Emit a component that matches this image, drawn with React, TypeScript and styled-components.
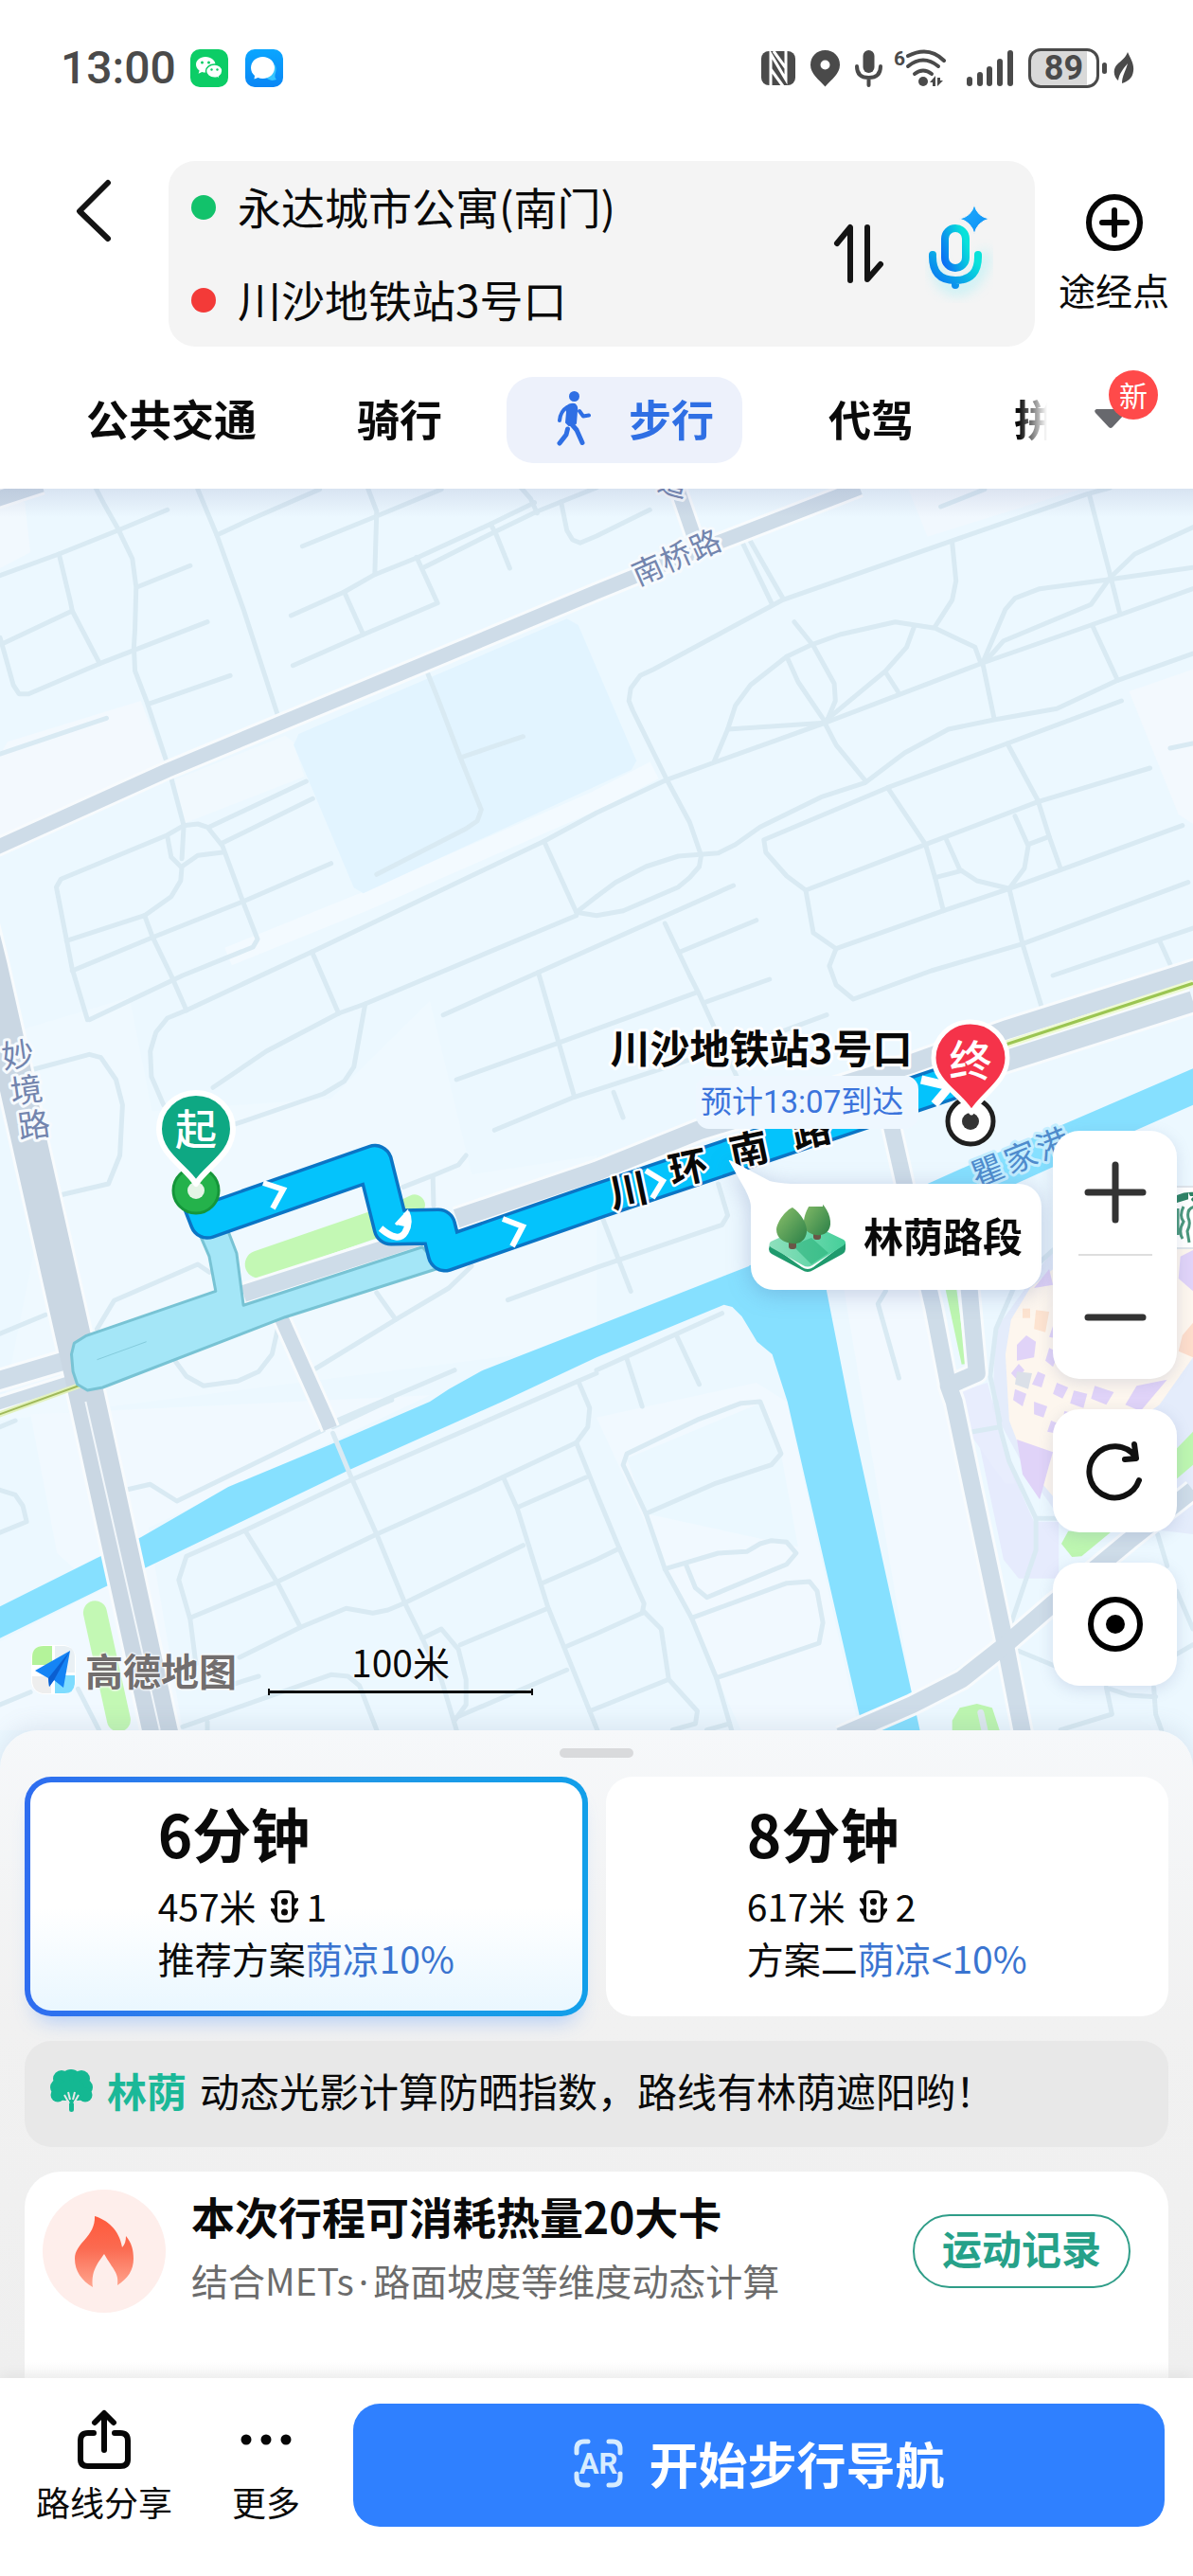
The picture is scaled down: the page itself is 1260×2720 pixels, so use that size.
import React from 'react';
import styled, { createGlobalStyle, css } from 'styled-components';

const GlobalStyle = createGlobalStyle`
  *, *::before, *::after { box-sizing: border-box; }
  body {
    margin: 0;
    background: #ffffff;
    color: #0a0a0a;
    font-family: "Noto Sans CJK SC", "Noto Sans", sans-serif;
  }
  button, input { font: inherit; color: inherit; }
  button { background: none; border: 0; padding: 0; margin: 0; cursor: pointer; }
  svg { display: block; }
`;

/* ---------- page ---------- */

const Page = styled.div`
  display: flex;
  flex-direction: column;
  width: 100%;
  overflow: hidden;
`;

const Header = styled.header`
  padding: 51px 0 27px;
  background: #ffffff;
`;

/* ---------- status bar ---------- */

const StatusBar = styled.div`
  display: flex;
  align-items: center;
  justify-content: space-between;
  height: 42px;
  padding: 0 62px 0 64px;
  color: #4a4a4a;
`;

const StatusGroup = styled.div<{ $gap: number }>`
  display: flex;
  align-items: center;
  gap: ${(p) => p.$gap}px;
`;

const Clock = styled.time`
  font: 500 48px/42px Roboto, sans-serif;
  margin-right: -3px;
`;

const BatteryText = styled.span`
  display: flex;
  align-items: center;
  justify-content: center;
  width: 75px;
  height: 42px;
  border: 3px solid #4a4a4a;
  border-radius: 13px;
  background: linear-gradient(90deg, #d9d9d9 85%, #ffffff 85%);
  font: 700 36px/36px Roboto, sans-serif;
`;

const Battery = styled.div`
  display: flex;
  align-items: center;
  gap: 3px;
  &::after {
    content: '';
    width: 5px;
    height: 12px;
    border-radius: 3px;
    background: #4a4a4a;
  }
`;

/* ---------- search ---------- */

const SearchRow = styled.div`
  display: flex;
  align-items: stretch;
  margin-top: 77px;
`;

const BackButton = styled.button`
  display: flex;
  flex: 0 0 178px;
  align-items: flex-start;
  padding: 19px 0 0 79px;
`;

const SearchBox = styled.div`
  display: flex;
  flex: 1;
  min-width: 0;
  align-items: center;
  padding: 0 44px 0 24px;
  border-radius: 28px;
  background: #f4f4f4;
`;

const Fields = styled.div`
  flex: 1;
  min-width: 0;
`;

const Field = styled.label<{ $dot: string }>`
  display: flex;
  align-items: center;
  gap: 23px;
  height: 98px;
  &::before {
    content: '';
    flex: none;
    width: 26px;
    height: 26px;
    border-radius: 50%;
    background: ${(p) => p.$dot};
  }
`;

const FieldInput = styled.input`
  flex: 1;
  min-width: 0;
  height: 72px;
  padding: 0 0 4px;
  border: 0;
  outline: 0;
  background: transparent;
  font-size: 46px;
  line-height: 68px;
`;

const BoxButton = styled.button`
  margin-left: 43px;
`;

const ViaButton = styled.button`
  display: flex;
  flex: 0 0 167px;
  flex-direction: column;
  align-items: center;
  padding-top: 34px;
  font-size: 39px;
  line-height: 56px;
  gap: 11px;
`;

/* ---------- tabs ---------- */

const TabRow = styled.div`
  display: flex;
  height: 91px;
  margin-top: 32px;
`;

const Tabs = styled.nav`
  display: flex;
  flex: 1;
  min-width: 0;
  padding-left: 38px;
  overflow: hidden;
  mask-image: linear-gradient(90deg, #000 calc(100% - 32px), transparent calc(100% - 2px));
`;

const Tab = styled.button<{ $active?: boolean }>`
  display: flex;
  flex: none;
  align-items: center;
  padding: 0 53px 4px;
  font-size: 45px;
  line-height: 66px;
  font-weight: 700;
  white-space: nowrap;
  ${(p) =>
    p.$active &&
    css`
      gap: 40px;
      margin: 0 38px 0 15px;
      padding: 0 30px 4px 53px;
      border-radius: 28px;
      background: #edf1fb;
      color: #2f6fe4;
    `}
`;

const MoreTabs = styled.button`
  position: relative;
  flex: 0 0 152px;
`;

const TabArrow = styled.svg`
  position: absolute;
  left: 47px;
  top: 33px;
`;

const Badge = styled.span`
  position: absolute;
  left: 63px;
  top: -7px;
  width: 52px;
  height: 52px;
  border-radius: 50%;
  background: #ff4a4a;
  color: #ffffff;
  font-size: 30px;
  line-height: 50px;
  text-align: center;
`;

/* ---------- map ---------- */

const MapArea = styled.section`
  position: relative;
  height: 1351px;
  background: #eef8ff;
  overflow: hidden;
`;

const MapCanvas = styled.svg`
  width: 100%;
  height: 100%;
  text {
    font-family: "Noto Sans CJK SC", sans-serif;
    text-anchor: middle;
    paint-order: stroke;
    stroke-linejoin: round;
  }
`;

const HeaderShade = styled.div`
  position: absolute;
  inset: 0 0 auto;
  height: 30px;
  background: linear-gradient(rgba(110, 120, 170, 0.16), rgba(110, 120, 170, 0));
`;

const Eta = styled.div`
  position: absolute;
  left: calc(50% + 105px);
  top: 620px;
  padding: 0 16px 0 5px;
  border-radius: 14px;
  background: #eef7ff;
  color: #3b74dc;
  font: 400 33px/56px Roboto, "Noto Sans CJK SC", sans-serif;
  white-space: nowrap;
`;

const Callout = styled.div`
  position: absolute;
  left: calc(50% + 163px);
  top: 734px;
  display: flex;
  align-items: center;
  gap: 17px;
  height: 112px;
  padding: 0 20px 5px 18px;
  border-radius: 24px;
  background: #ffffff;
  filter: drop-shadow(0 4px 12px rgba(70, 90, 150, 0.28));
  font-size: 42px;
  line-height: 60px;
  font-weight: 700;
  white-space: nowrap;
`;

const CalloutTail = styled.svg`
  position: absolute;
  left: -24px;
  top: -26px;
`;

const Controls = styled.div`
  position: absolute;
  right: 17px;
  top: 678px;
  display: flex;
  flex-direction: column;
  gap: 32px;
`;

const ControlCard = styled.div`
  display: flex;
  flex-direction: column;
  align-items: center;
  width: 131px;
  border-radius: 28px;
  background: #ffffff;
  box-shadow: 0 4px 16px rgba(90, 110, 160, 0.18);
`;

const ControlButton = styled.button`
  display: flex;
  align-items: center;
  justify-content: center;
  width: 131px;
  height: 130px;
`;

const ControlRule = styled.hr`
  width: 78px;
  height: 2px;
  margin: 0;
  border: 0;
  background: #dedede;
`;

const Brand = styled.div`
  position: absolute;
  left: 32px;
  top: 1219px;
  display: flex;
  align-items: center;
  gap: 9px;
  color: #726e6e;
  font-size: 40px;
  line-height: 56px;
  font-weight: 700;
  text-shadow: 0 0 3px #fff, 0 0 3px #fff, 0 0 3px #fff;
`;

const Scale = styled.div`
  position: absolute;
  left: 283px;
  top: 1209px;
  width: 280px;
  font-size: 39px;
  line-height: 58px;
  text-align: center;
  text-shadow: 0 0 3px #fff, 0 0 3px #fff;
`;

const ScaleLine = styled.div`
  height: 7px;
  border: solid #0a0a0a;
  border-width: 0 2px;
  background: linear-gradient(#0a0a0a, #0a0a0a) center / 100% 3px no-repeat;
`;

/* ---------- bottom sheet ---------- */

const Sheet = styled.main`
  position: relative;
  display: flex;
  flex-direction: column;
  margin-top: -40px;
  padding: 19px 26px 0;
  border-radius: 40px 40px 0 0;
  background: linear-gradient(#f6f8fa, #f1f1f1 45%, #efefef);
  box-shadow: 0 -4px 26px rgba(90, 110, 150, 0.14);
`;

const Handle = styled.div`
  align-self: center;
  width: 78px;
  height: 10px;
  border-radius: 5px;
  background: #d9dadc;
`;

const Plans = styled.div`
  display: grid;
  grid-template-columns: 1fr 1fr;
  gap: 19px;
  margin-top: 20px;
`;

const Plan = styled.button<{ $selected?: boolean }>`
  display: flex;
  justify-content: center;
  padding: 18px 0 28px;
  border: 6px solid transparent;
  border-radius: 28px;
  text-align: left;
  background: #ffffff border-box;
  ${(p) =>
    p.$selected &&
    css`
      background: linear-gradient(#ffffff 55%, #eaf7ff) padding-box,
        linear-gradient(90deg, #2f6df0, #1f97e6 60%, #129fea) border-box;
      box-shadow: 0 16px 22px -12px rgba(70, 140, 255, 0.4);
    `}
`;

const PlanBody = styled.span`
  display: flex;
  flex-direction: column;
`;

const PlanTime = styled.strong`
  font-size: 62px;
  line-height: 70px;
  font-weight: 700;
  margin-bottom: 15px;
`;

const PlanLine = styled.span`
  display: flex;
  align-items: center;
  height: 55px;
  font-size: 39px;
  line-height: 55px;
  white-space: nowrap;
  svg { margin: 0 9px 0 15px; }
`;

const Cool = styled.span`
  color: #3a74d0;
`;

const Notice = styled.div`
  display: flex;
  align-items: center;
  height: 112px;
  margin-top: 26px;
  padding: 0 27px 8px;
  border-radius: 28px;
  background: #e8e8e8;
  font-size: 42px;
  line-height: 60px;
  white-space: nowrap;
`;

const NoticeTag = styled.strong`
  margin: 0 14px 0 15px;
  color: #1bb898;
  font-weight: 700;
`;

const Sport = styled.section`
  display: flex;
  align-items: flex-start;
  height: 218px;
  margin-top: 26px;
  padding: 19px 40px 0 19px;
  border-radius: 38px 38px 0 0;
  background: linear-gradient(#ffffff 92%, #f8f8f8);
`;

const FlameDisc = styled.div`
  display: flex;
  flex: none;
  align-items: center;
  justify-content: center;
  width: 130px;
  height: 130px;
  border-radius: 50%;
  background: #feeeeb;
`;

const SportText = styled.div`
  flex: 1;
  min-width: 0;
  margin-left: 27px;
  white-space: nowrap;
`;

const SportTitle = styled.h2`
  margin: -7px 0 0;
  font-size: 46px;
  line-height: 68px;
  font-weight: 700;
`;

const SportNote = styled.p`
  margin: 6px 0 0;
  color: #6c6c6c;
  font-size: 39px;
  line-height: 56px;
`;

const MiddleDot = styled.span`
  margin: 0 5px;
  font-family: "Noto Sans", sans-serif;
`;

const RecordButton = styled.button`
  flex: none;
  height: 78px;
  margin-top: 26px;
  padding: 0 29px 8px;
  border: 2px solid #2f9d88;
  border-radius: 39px;
  color: #26a189;
  font-size: 42px;
  line-height: 60px;
  font-weight: 700;
`;

/* ---------- footer ---------- */

const Footer = styled.footer`
  position: relative;
  display: flex;
  align-items: flex-start;
  height: 209px;
  padding: 27px 30px 0 13px;
  background: #ffffff;
  box-shadow: 0 -3px 14px rgba(0, 0, 0, 0.06);
`;

const FooterAction = styled.button<{ $width: number }>`
  display: flex;
  flex-direction: column;
  align-items: center;
  width: ${(p) => p.$width}px;
  padding-top: 6px;
  gap: 5px;
  font-size: 36px;
  line-height: 56px;
  white-space: nowrap;
`;

const StartButton = styled.button`
  display: flex;
  flex: 1;
  align-items: center;
  justify-content: center;
  gap: 26px;
  height: 130px;
  margin-left: 18px;
  padding-bottom: 4px;
  border-radius: 28px;
  background: #2f80ff;
  color: #ffffff;
  font-size: 52px;
  line-height: 76px;
  font-weight: 700;
`;

/* ---------- map data ---------- */

type Tile = { x: number; y: number };

const NW: Tile = { x: 0, y: 510 };
const NE: Tile = { x: 630, y: 510 };
const W: Tile = { x: 0, y: 1020 };
const E: Tile = { x: 630, y: 1020 };
const SW: Tile = { x: 0, y: 1480 };
const SE: Tile = { x: 630, y: 1480 };

// A tile spans 630 map units over a local grid 1568 wide; its rows are a third of a unit.
const project = (tile: Tile, points: string) =>
  points
    .split(' ')
    .map((pair) => {
      const [x, y] = pair.split(',').map(Number);
      return `${(tile.x + (x * 630) / 1568).toFixed(1)},${(tile.y + y / 3).toFixed(1)}`;
    })
    .join(' ');

const LANES: [Tile, string[]][] = [
  [NW, [
    '-5,295 155,225 310,150 440,85',
    '245,0 275,70 310,145 348,240 358,330 355,460 352,520 355,595 385,690 410,780 440,890',
    '450,935 483,1085 478,1190',
    '520,20 570,165 640,400 730,735',
    '570,165 650,120 840,20',
    '155,225 185,375 190,405 262,572',
    '5,510 190,405',
    '0,490 12,540 35,640 50,668 75,668 262,572 352,530 545,440',
    '360,330 500,262',
    '390,700 605,610',
    '-5,860 280,745',
    '795,200 990,105 1160,20',
    '965,10 990,90 985,290',
    '765,420 905,345 985,290 1100,235 1290,130 1405,62',
    '1110,270 1300,155 1412,90 1568,15',
    '1370,15 1395,50 1412,95',
    '1290,130 1305,165 1340,270',
    '905,345 955,480',
    '770,578 955,480 1150,380 1095,235',
    '1475,60 1490,150 1505,180 1525,190 1568,168 1708,85',
    '1120,590 1150,680 1210,870 1265,1035 1255,1070 1225,1095 990,1240',
    '1210,870 1375,803',
    '550,1090 805,945',
    '585,1140 822,1000',
    '483,1085 440,1115 160,1255 148,1280 190,1540 230,1700',
    '483,1085 520,1080 545,1090 585,1150 640,1330 677,1445 665,1470 480,1560 235,1700',
    '440,1120 450,1185 475,1215',
    '585,1170 520,1180 478,1215 475,1260 450,1310 380,1370 175,1450',
    '190,1545 400,1440 640,1325 870,1205',
    '380,1370 400,1435 450,1560 490,1670',
    '490,1670 820,1485 1430,1135 1568,1045 1753,940',
    '820,1485 890,1680',
    '1430,1135 1515,1360 1568,1370 1638,1355 1783,1280 1813,1250 1838,1215 1843,1180',
    '1515,1360 1568,1310',
    '890,1680 960,1650 1515,1370',
    '1165,1685 1415,1550 1928,1275',
  ]],
  [NE, [
    '380,180 460,380',
    '400,175 490,365',
    '185,940 95,720 85,690 90,650 115,610 150,590 490,370 930,185 1290,35 1350,15',
    '185,940 245,1075 275,1180',
    '905,75 1020,20',
    '1295,35 1350,290 1375,410',
    '935,190 945,310 935,370 890,455',
    '520,440 570,515 625,635 628,690 605,755',
    '310,880 345,780 365,705 405,640 500,550 560,515 640,480 785,440 890,460 995,520 1010,570',
    '500,550 530,630 600,755',
    '345,780 600,760',
    '185,940 310,885 600,760 1015,570 1300,450 1568,335',
    '835,455 815,520 760,595 600,755',
    '760,600 792,660',
    '1015,570 1075,400 1100,365 1165,335 1350,305 1568,268',
    '1030,555 1070,500 1300,385 1350,300 1415,225 1568,140',
    '1015,570 1045,745',
    '1305,455 1370,625',
    '0,1310 50,1265 130,1215 215,1182 320,1172 365,1145 430,1090 590,995 705,950 810,855 925,780 1045,750 1210,715 1370,625 1568,540',
    '600,760 630,830 708,945',
    '550,1290 500,1245 445,1170 440,1130 765,965 1080,825 1380,690',
    '550,1290 865,1145 1160,1010 1455,903',
    '765,965 865,1145 890,1250 912,1355',
    '1080,825 1160,1005 1190,1120 1218,1215',
    '920,1130 955,1225 1000,1260 1085,1285 1125,1220 1135,1150 1100,1055',
    '890,1250 960,1228',
    '1135,1145 1190,1120',
    '550,1290 570,1425 630,1475 912,1355 1085,1285 1540,1085',
    '630,1475 612,1530 630,1590 675,1635 880,1545 1120,1460 1555,1265',
    '1085,1285 1120,1460 1170,1660',
    '1200,1560 1568,1410',
    '1480,1450 1510,1530',
    '1508,840 1568,825',
    '180,1395 245,1560 270,1620 380,1910',
    '220,1485 420,1385',
  ]],
  [W, [
    '490,140 440,165 410,210 395,270 398,350 430,440',
    '890,150 700,270 560,385',
    '960,120 930,320 905,365 850,405 620,500',
    '80,330 235,280 265,290 305,360 322,440 315,600 285,690 160,725',
    '1415,20 1510,415',
    '1200,360 1465,245 1828,85',
    '1300,520 1510,415 1958,240',
    '1225,600 1205,630 1135,665 1060,700',
    '1138,670 1140,760',
    '550,970 520,945 300,1060 255,1150',
    '0,1165 120,1105',
    '460,1250 490,1300 535,1330 625,1315 680,1285 715,1230 730,1150',
    '990,1035 1040,1120',
    '830,1275 1040,1120 1180,1020 1240,950',
    '1335,1058 1568,955 1898,820 1913,790 1888,690',
    '885,1440 1195,1280',
  ]],
  [E, [
    '285,115 455,42',
    '380,255 605,155',
    '45,400 70,480',
    '10,780 90,1030',
    '0,1280 330,1100',
    '210,1170 270,1325',
    '80,1245 120,1395',
    '760,1030 740,1070 795,1305',
    '1200,900 1100,1010 1050,1150 1035,1300 1060,1440',
  ]],
  [SW, [
    '330,280 395,262 465,315 850,90',
    '875,80 1000,10 1030,-5',
    '515,830 500,690 470,565 490,490 640,410 920,250 1520,-65 1568,-90',
    '645,410 730,575 790,715',
    '500,685 730,570 990,420 1250,280 1515,130',
    '1520,-65 1550,20 1545,80 1515,130 1568,290 1628,465',
    '1325,245 1360,340 1440,650 1550,980 1570,1040',
    '1360,335 1540,240',
    '1060,640 1375,455',
    '1425,575 1568,500 1628,465',
    '630,810 790,715 910,655 980,670 1020,660 1060,640',
    '1110,750 1160,720 1205,785 1225,880 1225,960 1195,1010',
    '1210,770 1440,655',
    '1490,775 1568,735 1688,670',
    '1200,1000 1490,850',
    '1550,980 1758,880',
    '480,1030 870,865 915,870 945,900 990,1040',
    '600,900 680,870',
    '545,1015 545,1040',
    '0,280 40,295 60,330 70,380 0,415',
    '0,80 40,60',
    '0,960 80,920',
    '205,910 260,1040',
    '875,100 920,230 990,420 1065,640 1110,750 1160,880 1200,1040',
  ]],
  [SE, [
    '130,355 310,260 460,200 485,165 430,0 380,5 270,55 80,165 70,200 130,355',
    '130,355 180,530 250,685 315,875 355,1040',
    '180,530 320,480 395,475 430,450 460,440 500,445 525,480 500,515 290,620 260,590 235,515',
    '250,685 500,575 560,570 580,600 595,700 585,765 315,875',
    '60,465 125,640 120,670',
    '125,665 170,720 190,880 265,980 260,1020 200,1040',
    '290,1040 350,1020',
    '975,98 1060,80 1050,0',
    '1060,80 1085,190 1155,370 1155,470 1085,720',
    '1155,370 1220,370',
    '1090,780 1230,850',
    '1475,420 1500,520',
    '1525,600 1568,720',
    '1525,800 1568,770',
    '1340,905 1355,990 1220,1040',
    '1350,910 1400,930 1470,935',
    '1465,905 1470,990 1485,1040',
  ]],
];

type Road = [Tile, string, number];

const ROADS: Road[] = [
  [NW, '-10,1155 440,910 735,762 1120,570 1568,345 1880,192 2260,15', 15],
  [NW, '-10,52 110,5', 16],
  [NE, '205,-10 255,165', 15],
  [W, '730,1090 860,1440 868,1465', 15],
  [W, '640,1038 1200,822', 18],
  [W, '1200,800 1568,650 1838,520 2400,308 2650,200 3150,10', 20],
  [E, '1000,330 1568,112', 22],
  [W, '-10,1315 200,1240', 19],
  [W, '-10,1390 200,1310', 12],
  [E, '770,480 815,720 885,1080 925,1330', 17],
  [E, '975,960 1000,1290 925,1330 940,1380 1075,2150 1120,2430', 18],
  [SE, '640,1060 830,960 960,880 1075,770 1200,640 1400,440 1568,280', 18],
];

const LILAC_BLOCKS = [
  '1190,960 1200,1010 1150,1020', '1130,1170 1155,1190 1150,1240 1105,1250 1105,1200',
  '1090,1290 1110,1260 1125,1280 1105,1310', '1160,1285 1180,1295 1170,1335 1145,1325',
  '1190,1210 1215,1225 1200,1270 1180,1250', '1210,1320 1240,1335 1225,1370 1200,1355',
  '1100,1340 1130,1355 1120,1395 1095,1375', '1150,1380 1185,1395 1175,1430 1150,1420',
  '1255,1345 1290,1355 1280,1400 1245,1385', '1310,1330 1360,1350 1340,1390 1300,1370',
  '1420,1330 1500,1310 1430,1410 1390,1390', '1230,1410 1270,1420 1265,1440 1225,1440',
  '1105,1500 1200,1540 1190,1580 1165,1690 1120,1610', '1195,1440 1215,1450 1205,1480 1185,1475',
  '1535,920 1568,900 1568,1030 1530,990', '1200,1140 1215,1145 1210,1180 1190,1175',
];

const Poly = ({ tile, points, fill }: { tile: Tile; points: string; fill: string }) => (
  <polygon points={project(tile, points)} fill={fill} />
);

const Line = ({ tile, points, color, width, cap = 'butt' }: {
  tile: Tile; points: string; color: string; width: number; cap?: 'butt' | 'round';
}) => (
  <polyline
    points={project(tile, points)}
    fill="none"
    stroke={color}
    strokeWidth={width}
    strokeLinecap={cap}
    strokeLinejoin="round"
  />
);

const Name = ({ chars, size, angle, color, halo, weight = 400, haloWidth = 6 }: {
  chars: [string, number, number][]; size: number; angle: number; color: string; halo: string;
  weight?: number; haloWidth?: number;
}) => (
  <g fontSize={size} fill={color} stroke={halo} strokeWidth={haloWidth} fontWeight={weight}>
    {chars.map(([c, x, y]) => (
      <text key={c} transform={`translate(${x} ${y}) rotate(${angle})`} y={size * 0.36}>{c}</text>
    ))}
  </g>
);

const ROUTE = '515,715 545,808 985,622 1028,828 1152,825 1170,912 1568,745 2518,360';

const StreetMap = () => (
  <MapCanvas viewBox="0 516 1260 1351" preserveAspectRatio="xMidYMin slice" role="img" aria-label="步行路线地图">
    <rect x="0" y="516" width="1260" height="1351" fill="#ecf8ff" />
    <Poly tile={NW} points="20,820 370,690 430,880 0,1130 0,860" fill="#f3f9fe" />
    <Poly tile={NW} points="460,940 750,800 770,820 800,930 480,1080" fill="#f1f9fe" />
    <Poly tile={NW} points="0,60 65,60 80,220 0,270" fill="#f2f9fe" />
    <Line tile={NW} points="600,1500 950,1330 1568,1005 1720,910" color="#f3faff" width={20} />
    <Poly tile={NE} points="1400,660 1568,590 1568,1080 1530,1050" fill="#f3f9fe" />
    <Poly tile={NE} points="820,20 1270,20 870,170" fill="#f1f8fe" />
    <Poly tile={W} points="60,200 340,100 400,460 870,420 1130,110 1240,660 1568,600 1568,1200 0,1440 140,600" fill="#eff9ff" />
    <Poly tile={SW} points="80,40 1130,-20 390,400 480,1040 0,1040 0,760 260,600 150,480" fill="#f1f9ff" />
    <Poly tile={SE} points="650,-360 900,-360 1060,760 830,930" fill="#f2f9ff" />
    <Poly tile={SE} points="0,50 420,-60 500,0 690,1040 380,1040" fill="#f1f9ff" />
    <Poly tile={SE} points="80,180 430,5 485,165 530,460 130,355" fill="#ebf8ff" />
    <Poly tile={NW} points="772,830 785,795 1490,430 1520,450 1673,880 1660,908 955,1300 930,1282" fill="#e2f4ff" />

    <Poly tile={SE} points="1000,100 1060,90 1120,300 1150,380 1215,380 1215,560 1110,560 1070,500" fill="#e6ebfd" />
    <Poly tile={E} points="950,1350 1028,1320 1060,1470 1100,1640 1075,1640 980,1480" fill="#e8edfd" />
    <Poly tile={E} points="1200,900 1568,800 1568,1800 1220,1750 1130,1600 1040,1400 1050,1150" fill="#e4ecfb" />
    <Poly tile={E} points="1210,950 1140,1020 1090,1120 1075,1230 1085,1440 1130,1580 1200,1680 1350,1500 1480,1390 1568,1240 1568,890" fill="#fdf6ee" />
    {LILAC_BLOCKS.map((points) => <Poly key={points} tile={E} points={points} fill="#e0d3f8" />)}
    <Poly tile={E} points="1155,1090 1190,1095 1180,1160 1150,1150" fill="#fde3d0" />
    <Poly tile={E} points="1120,1085 1140,1085 1140,1115 1120,1115" fill="#fde3d0" />
    <Poly tile={E} points="1540,1170 1568,1130 1568,1240 1530,1220" fill="#fdddcb" />
    <Poly tile={E} points="1105,1285 1145,1290 1135,1340 1100,1325" fill="#dbe0e8" />

    <Poly
      tile={SW}
      points="-10,655 255,495 370,430 600,270 870,135 1130,0 1180,-40 1270,-100 1568,-240 1970,-430 2168,-380 2240,60 2418,1040 2450,1180 2290,1180 2268,1040 2070,0 2030,-150 1990,-190 1950,-270 1925,-300 1903,-307 1568,-140 1320,0 920,215 385,525 270,590 -10,755"
      fill="#86e0ff"
    />
    <Poly tile={E} points="400,950 870,690 1000,620 1230,500 1568,325 1568,440 1230,620 900,800 600,1030" fill="#86e0ff" />

    <g>
      {LANES.flatMap(([tile, lanes]) =>
        lanes.map((points) => <Line key={tile.x + '-' + tile.y + points} tile={tile} points={points} color="#d9eaf3" width={5} cap="round" />),
      )}
    </g>

    <Line tile={W} points="680,945 985,818" color="#c3f8b4" width={29} cap="round" />
    <Line tile={W} points="1000,810 1090,757" color="#c3f8b4" width={22} cap="round" />
    <Line tile={SW} points="250,668 312,1008" color="#c3f8b4" width={25} cap="round" />
    <Poly tile={E} points="915,1010 945,1010 972,1260 960,1262" fill="#bdf6b0" />
    <Poly tile={SE} points="1222,450 1240,410 1355,410 1275,490 1250,492" fill="#bdf6b0" />
    <Poly tile={SE} points="1500,180 1568,95 1568,200 1510,260" fill="#bdf6b0" />
    <Poly tile={SE} points="935,1050 935,1010 955,970 1000,957 1040,970 1062,1050" fill="#bdf6b0" />
    <Line tile={SE} points="1010,985 1022,1050" color="#dde8ee" width={7} cap="round" />

    {ROADS.map(([tile, points, width]) => (
      <Line key={'edge' + points} tile={tile} points={points} color="#f8fbfd" width={width + 6} />
    ))}
    <Line tile={W} points="-60,-160 -27,0 235,1400 420,2420 440,2520" color="#f8fbfd" width={43} />
    {ROADS.map(([tile, points, width]) => (
      <Line key={points} tile={tile} points={points} color="#cedce8" width={width} />
    ))}
    <Line tile={W} points="-60,-160 -27,0 235,1400 420,2420 440,2520" color="#cad7e3" width={37} />
    <Line tile={SW} points="225,0 420,1040" color="#f1f6fa" width={2} />
    <Line tile={W} points="-10,1424 210,1328" color="#e3f2bf" width={6} />
    <Line tile={W} points="-10,1424 210,1328" color="#a0b95a" width={2} />
    <Line tile={E} points="1060,255 1568,55" color="#eefad2" width={8} />
    <Line tile={E} points="1060,255 1568,55" color="#9bc552" width={3} />

    <polygon
      points={project(W, '188,1230 195,1195 225,1172 567,1030 550,920 525,850 598,835 622,910 640,1075 1110,890 1160,955 750,1112 270,1335 230,1344 203,1325 192,1285')}
      fill="#a4e6f7"
      stroke="#78c3d4"
      strokeWidth="3"
      strokeLinejoin="round"
    />
    <Line tile={W} points="255,1247 385,1190" color="#84cbdc" width={1} />
    <Line tile={W} points={ROUTE} color="#0b75c5" width={39} cap="round" />
    <Line tile={W} points={ROUTE} color="#04c3fc" width={32} cap="round" />
    <g fill="none" stroke="#ffffff" strokeWidth="6">
      <polyline points="278,1249 299,1256 288,1276" />
      <polyline points="531,1287 552,1295 541,1316" />
      <polyline points="682,1236 700,1247 689,1265" />
      <polyline points="973,1140 1003,1147 987,1166" strokeWidth="9" />
      <path d="M402 1297 Q421 1313 428 1301 Q434 1290 429 1280" strokeWidth="7" />
      <path d="M418 1293 L430 1280 L432 1296" strokeWidth="3" fill="#ffffff" />
    </g>

    <Name size={34} angle={-8} color="#7385ae" halo="#f6fafd" chars={[['妙', 19, 1114], ['境', 28, 1151], ['路', 36, 1188]]} />
    <Name size={32} angle={-24} color="#7385ae" halo="#f6fafd" chars={[['南', 684, 602], ['桥', 714, 588], ['路', 745, 575]]} />
    <Name size={31} angle={16} color="#7385ae" halo="#f6fafd" chars={[['道', 711, 511]]} />
    <Name size={34} angle={-22} color="#4f8ccd" halo="#c4eeff" chars={[['瞿', 1043, 1236], ['家', 1078, 1222], ['港', 1112, 1208]]} />
    <Name size={41} angle={-12} color="#080808" halo="#ffffff" weight={700} haloWidth={5} chars={[['川', 664, 1257], ['环', 727, 1233], ['南', 791, 1214], ['路', 857, 1194]]} />
    <text x="804" y="1123" fontSize="42" fontWeight="700" fill="#080808" stroke="#ffffff" strokeWidth="6">川沙地铁站3号口</text>

    <g>
      <circle cx="207" cy="1257" r="24" fill="#24b24b" stroke="#15963a" strokeWidth="3" />
      <circle cx="207" cy="1257" r="9" fill="#e4f4e6" />
      <path d="M207 1250 C196 1232 168 1219 168 1192 A39 38 0 0 1 246 1192 C246 1219 218 1232 207 1250Z" fill="#0ea883" stroke="#ffffff" strokeWidth="6" strokeLinejoin="round" />
      <text x="207" y="1209" fontSize="44" fontWeight="500" fill="#ffffff">起</text>
    </g>
    <g>
      <circle cx="1025" cy="1184" r="24" fill="#ffffff" stroke="#1f1f1f" strokeWidth="5" />
      <circle cx="1025" cy="1184" r="9" fill="#333333" />
      <path d="M1026 1175 C1015 1155 986 1143 986 1117 A39 38 0 0 1 1064 1117 C1064 1143 1037 1155 1026 1175Z" fill="#f5334a" stroke="#ffffff" strokeWidth="5" strokeLinejoin="round" />
      <text x="1025" y="1137" fontSize="45" fontWeight="500" fill="#ffffff">终</text>
    </g>

    <rect x="1226" y="1253" width="80" height="65" rx="14" fill="#ffffff" stroke="#dfe5ea" strokeWidth="2" />
    <g fill="none" stroke="#4a977c" strokeWidth="3">
      <path d="M1243 1262 Q1252 1258 1262 1259 V1270 L1256 1266 L1243 1270Z" fill="#2d8264" stroke="none" />
      <path d="M1250 1274 Q1245 1284 1250 1290 Q1244 1300 1249 1308 M1262 1274 Q1253 1276 1255 1286 Q1258 1292 1254 1300 L1256 1312 M1244 1276 V1304" />
      <path d="M1255 1259L1257 1263L1261 1263L1258 1266L1259 1270L1255 1268" fill="#ffffff" stroke="none" />
    </g>
  </MapCanvas>
);

/* ---------- icons ---------- */

const WeChatIcon = () => (
  <svg width="40" height="40" viewBox="0 0 40 40">
    <rect width="40" height="40" rx="10" fill="#0ccd66" />
    <path d="M16 8c-6 0-10 3.700-10 8.300 0 2.600 1.400 4.800 3.600 6.200l-1 3.200 3.700-1.800c1.200.4 2.400.6 3.700.6 6 0 10.500-3.700 10.500-8.200S22 8 16 8Z" fill="#fff" />
    <path d="M25.500 16c-5 0-9 3.100-9 7.100s4 7.200 9 7.200c1 0 2-.1 2.900-.4l3 1.500-.8-2.600c2-1.300 3.300-3.300 3.300-5.700 0-4-3.600-7.100-8.400-7.100Z" fill="#fff" stroke="#0ccd66" strokeWidth="1.500" />
    <g fill="#0ccd66"><circle cx="12.500" cy="14" r="1.500" /><circle cx="19.500" cy="14" r="1.500" /><circle cx="22.500" cy="21.500" r="1.200" /><circle cx="28.500" cy="21.500" r="1.200" /></g>
  </svg>
);

const MessageIcon = () => (
  <svg width="40" height="40" viewBox="0 0 40 40">
    <defs><linearGradient id="msg" x1="0" y1="0" x2="0" y2="1"><stop stopColor="#0aa6ff" /><stop offset="1" stopColor="#0a86f5" /></linearGradient></defs>
    <rect width="40" height="40" rx="10" fill="url(#msg)" />
    <path d="M31 16a13 13 0 0 1-9 14c5 4 8 3 11 2-2-2-2-4-1-7 1-4 1-6-1-9Z" fill="#36c5ff" />
    <path d="M18.500 8C11.500 8 6 13 6 19.500c0 3.700 1.700 6.500 4 8.500l-.5 3.500 4-1.500c1.500.6 3.300 1 5 1C25.500 31 31 26 31 19.500S25.500 8 18.500 8Z" fill="#fff" />
  </svg>
);

const StatusIcons = () => (
  <svg width="268" height="42" viewBox="802 51 268 42" fill="#4a4a4a" aria-hidden="true">
    <rect x="803" y="54" width="36" height="36" rx="8" />
    <path d="M813 91V57L829 84V54M816 54L829 72M813 73L826 91" stroke="#fff" strokeWidth="3" fill="none" />
    <path d="M870.500 53C861.500 53 855 59.500 855 68.500C855 78 864 84 870.500 91.500C877 84 886 78 886 68.500C886 59.500 879.500 53 870.500 53ZM870.500 63.500A5 5 0 1 1 870.500 73.500A5 5 0 1 1 870.500 63.500Z" fillRule="evenodd" />
    <rect x="910.500" y="53" width="12" height="24" rx="6" />
    <path d="M904 70Q904 82 916.500 82Q929 82 929 70M916.500 82V90" fill="none" stroke="#4a4a4a" strokeWidth="4" strokeLinecap="round" />
    <text x="943" y="69" fontSize="21" fontWeight="700" fontFamily="Roboto, sans-serif">6</text>
    <g fill="none" stroke="#4a4a4a" strokeWidth="4" strokeLinecap="round">
      <path d="M958 59Q980 48 996 64" /><path d="M958 70Q974 57 990 70" /><path d="M965 78Q974 71 983 78" />
    </g>
    <circle cx="974" cy="86" r="5" />
    <path d="M981 87L987 80V91H984V87ZM995 85L989 91V82H992V85Z" />
    <rect x="1020" y="81" width="6" height="10" rx="3" /><rect x="1031" y="76" width="6" height="15" rx="3" />
    <rect x="1041" y="70" width="6" height="21" rx="3" /><rect x="1052" y="62" width="6" height="29" rx="3" />
    <rect x="1063" y="53" width="6" height="38" rx="3" />
  </svg>
);

const LeafIcon = () => (
  <svg width="22" height="34" viewBox="0 0 22 34" fill="#4a4a4a">
    <path d="M15 0C18 7 22 12 21 20C20 28 15 31 9 33C9 25 13 20 15 12C10 18 6 23 5 30C0 26-1 18 4 13C8 9 13 6 15 0Z" />
  </svg>
);

const SwapIcon = () => (
  <svg width="54" height="64" viewBox="0 0 54 64" fill="none" stroke="#141414" strokeWidth="6" strokeLinecap="round" strokeLinejoin="round">
    <path d="M4 21L18 4V60M36 4V59L50 43" />
  </svg>
);

const VoiceIcon = () => (
  <svg width="72" height="104" viewBox="0 0 72 104" fill="none">
    <defs>
      <linearGradient id="voice" x1="0" y1="1" x2="1" y2="0.300"><stop stopColor="#0b6df5" /><stop offset="1" stopColor="#08e2da" /></linearGradient>
      <linearGradient id="star" x1="0" y1="0" x2="1" y2="1"><stop stopColor="#22aefc" /><stop offset="1" stopColor="#0a8df6" /></linearGradient>
      <filter id="glow" x="-50%" y="-50%" width="200%" height="200%"><feGaussianBlur stdDeviation="7" /></filter>
    </defs>
    <path d="M12 60Q14 88 34 90Q58 86 64 50" stroke="#a9eff6" strokeWidth="9" filter="url(#glow)" opacity="0.8" />
    <path d="M8 53Q7 80 32 80Q57 80 56 53M32 80V85" stroke="url(#voice)" strokeWidth="8" strokeLinecap="round" />
    <rect x="21" y="25" width="22" height="42" rx="11" stroke="url(#voice)" strokeWidth="8" />
    <path d="M52 0Q55 13 68 15Q55 18 52 31Q49 18 36 15Q49 13 52 0Z" fill="url(#star)" stroke="#f4f4f4" strokeWidth="1" />
  </svg>
);

const WalkerIcon = () => (
  <svg width="36" height="58" viewBox="0 0 36 58" fill="none" stroke="#2f6fe4" strokeWidth="5" strokeLinecap="round" strokeLinejoin="round">
    <circle cx="18.500" cy="5.500" r="5.500" fill="#2f6fe4" stroke="none" />
    <path d="M10 17Q14 13 19 14Q22 16 21 21L20 34L13 36L10 33L11 22Z" fill="#2f6fe4" strokeWidth="2" />
    <path d="M11 17Q4 21 3 31M24 21L28 26.500L34 25.500" strokeWidth="4" />
    <path d="M15 34L21 41L27 54.500M11.500 40L10 46L3 55" />
  </svg>
);

const SignalIcon = () => (
  <svg width="29" height="34" viewBox="0 0 29 34" fill="none" stroke="#0a0a0a" strokeWidth="3">
    <rect x="5.500" y="1.500" width="18" height="31" rx="5" />
    <circle cx="14.500" cy="12" r="3.500" fill="#0a0a0a" stroke="none" /><circle cx="14.500" cy="23" r="3.500" fill="#0a0a0a" stroke="none" />
    <path d="M0 9L4 9V15ZM29 9L25 9V15ZM0 20L4 20V26ZM29 20L25 20V26Z" fill="#0a0a0a" strokeWidth="1.500" />
  </svg>
);

const TreeIcon = () => (
  <svg width="45" height="46" viewBox="0 0 45 46" fill="#14b892">
    <circle cx="22" cy="12" r="11" /><circle cx="12" cy="11" r="9" /><circle cx="33" cy="11" r="9" />
    <circle cx="9" cy="20" r="9" /><circle cx="36" cy="20" r="9" /><circle cx="8" cy="28" r="7.500" /><circle cx="37" cy="28" r="7.500" />
    <rect x="9" y="14" width="27" height="20" rx="6" />
    <path d="M20 28H25V44Q25 46 22.500 46T20 44Z" />
    <path d="M15 28L20 37M30 28L25 37M19 25L21 33M26 25L24 33" stroke="#e8e8e8" strokeWidth="2" />
  </svg>
);

const FlameIcon = () => (
  <svg width="62" height="75" viewBox="0 0 62 75">
    <defs><linearGradient id="flame" x1="0" y1="0" x2="0" y2="1"><stop stopColor="#ff5a3c" /><stop offset="0.450" stopColor="#fb6a50" /><stop offset="1" stopColor="#ffa58f" /></linearGradient></defs>
    <path d="M21 0C34 4 47 14 50 33C53 30 54 26 54 21C60 28 62 36 62 45C62 57 56 66 45 73C47 60 40 56 31 40C24 50 17 58 19 75C7 68 0 58 0 45C0 28 22 22 21 0Z" fill="url(#flame)" />
  </svg>
);

const GroveIcon = () => (
  <svg width="84" height="78" viewBox="0 0 84 78">
    <defs>
      <linearGradient id="leaf" x1="0" y1="0" x2="1" y2="1"><stop stopColor="#8cc06a" /><stop offset="1" stopColor="#2b8048" /></linearGradient>
      <linearGradient id="lawn" x1="0" y1="0" x2="1" y2="0"><stop stopColor="#8fe0bd" /><stop offset="1" stopColor="#45cf9a" /></linearGradient>
    </defs>
    <path d="M2 49L36 73Q42 77 48 73L82 47V54Q82 57 79 59L48 76Q42 80 36 76L4 59Q1 57 1 54Z" fill="#1f9a6d" />
    <path d="M3 46L34 32H55L80 44Q84 47 80 50L47 71Q42 74 37 71L3 52Q0 49 3 46Z" fill="url(#lawn)" />
    <path d="M26 50L46 42L64 58L46 70Z" fill="#2cb27c" opacity="0.600" />
    <rect x="22" y="44" width="8" height="10" rx="3" fill="#6b5647" /><rect x="48" y="34" width="8" height="10" rx="3" fill="#6b5647" />
    <path d="M50 0C60 6 67 18 66 28C65 37 58 40 51 39C42 38 37 32 38 24C39 15 45 4 50 0Z" fill="url(#leaf)" />
    <path d="M26 10C35 16 42 28 41 36C40 45 33 49 26 48C16 47 9 42 9 33C10 24 20 12 26 10Z" fill="url(#leaf)" />
  </svg>
);

const BrandIcon = () => (
  <svg width="49" height="54" viewBox="0 0 49 54">
    <rect x="1" y="1" width="47" height="52" rx="14" fill="#ffffff" />
    <path d="M14 2H23V22H2V14Q2 2 14 2Z" fill="#b4f39a" /><path d="M26 33H47V40Q47 52 36 52H26Z" fill="#7edcff" />
    <path d="M26 2H36Q47 3 47 14V30H26Z" fill="#e9f0f4" /><path d="M2 34H22V52H13Q2 50 2 38Z" fill="#eeeeee" />
    <path d="M42 7L5 28L19 36L20 45L25 38L35 46Z" fill="#1584f5" /><path d="M42 7L19 36L20 45L25 38Z" fill="#0b5fd0" />
  </svg>
);

const ShareIcon = () => (
  <svg width="58" height="64" viewBox="0 0 58 64" fill="none" stroke="#060606" strokeWidth="6" strokeLinecap="round" strokeLinejoin="round">
    <path d="M18 25H12Q4 25 4 33V53Q4 60 12 60H46Q54 60 54 53V33Q54 25 46 25H40M29 43V5M19 14L29 4L39 14" />
  </svg>
);

const MoreIcon = () => (
  <svg width="58" height="64" viewBox="0 0 58 64" fill="#060606">
    <circle cx="8" cy="32" r="5.500" /><circle cx="29" cy="32" r="5.500" /><circle cx="50" cy="32" r="5.500" />
  </svg>
);

const ArIcon = () => (
  <svg width="54" height="54" viewBox="0 0 54 54" fill="none" stroke="#d6ecff" strokeWidth="5" strokeLinecap="round">
    <path d="M4 16V12Q4 4 12 4H16M38 4H42Q50 4 50 12V16M50 38V42Q50 50 42 50H38M16 50H12Q4 50 4 42V38" />
    <text x="27" y="38" textAnchor="middle" fontSize="31" fontWeight="700" fontFamily="Roboto, sans-serif" fill="#d6ecff" stroke="none">AR</text>
  </svg>
);

/* ---------- content ---------- */

const PLANS = [
  { minutes: '6分钟', distance: '457米', lights: 1, label: '推荐方案', shade: '荫凉10%', selected: true },
  { minutes: '8分钟', distance: '617米', lights: 2, label: '方案二', shade: '荫凉<10%', selected: false },
];

export default function App() {
  return (
    <Page>
      <GlobalStyle />
      <Header>
        <StatusBar>
          <StatusGroup $gap={18}>
            <Clock>13:00</Clock>
            <WeChatIcon />
            <MessageIcon />
          </StatusGroup>
          <StatusGroup $gap={15}>
            <StatusIcons />
            <StatusGroup $gap={7}>
              <Battery><BatteryText>89</BatteryText></Battery>
              <LeafIcon />
            </StatusGroup>
          </StatusGroup>
        </StatusBar>

        <SearchRow>
          <BackButton aria-label="返回">
            <svg width="40" height="68" viewBox="0 0 40 68" fill="none" stroke="#141414" strokeWidth="6" strokeLinecap="round" strokeLinejoin="round">
              <path d="M35 4L5 34L35 63" />
            </svg>
          </BackButton>
          <SearchBox>
            <Fields>
              <Field $dot="#12c26b"><FieldInput aria-label="起点" defaultValue="永达城市公寓(南门)" /></Field>
              <Field $dot="#f33a38"><FieldInput aria-label="终点" defaultValue="川沙地铁站3号口" /></Field>
            </Fields>
            <BoxButton aria-label="交换起终点"><SwapIcon /></BoxButton>
            <BoxButton aria-label="语音输入"><VoiceIcon /></BoxButton>
          </SearchBox>
          <ViaButton>
            <svg width="62" height="62" viewBox="0 0 62 62" fill="none" stroke="#060606" strokeWidth="6" strokeLinecap="round">
              <circle cx="31" cy="31" r="27" /><path d="M31 18V44M18 31H44" />
            </svg>
            途经点
          </ViaButton>
        </SearchRow>

        <TabRow>
          <Tabs>
            <Tab>公共交通</Tab>
            <Tab>骑行</Tab>
            <Tab $active><WalkerIcon />步行</Tab>
            <Tab>代驾</Tab>
            <Tab>拼车</Tab>
          </Tabs>
          <MoreTabs aria-label="更多出行方式">
            <TabArrow width="36" height="22" viewBox="0 0 36 22"><path d="M3 1H33Q36 2 34 5L20 20Q18 22 16 20L2 5Q0 2 3 1Z" fill="#67686d" /></TabArrow>
            <Badge>新</Badge>
          </MoreTabs>
        </TabRow>
      </Header>

      <MapArea>
        <StreetMap />
        <HeaderShade />
        <Eta>预计13:07到达</Eta>
        <Callout>
          <CalloutTail width="110" height="60" viewBox="0 0 110 60"><path d="M1 2Q0 0 4 2L44 23Q60 27 100 27V50H24Q24 44 18 32Z" fill="#ffffff" /></CalloutTail>
          <GroveIcon />
          林荫路段
        </Callout>
        <Controls>
          <ControlCard>
            <ControlButton aria-label="放大">
              <svg width="66" height="66" viewBox="0 0 66 66" stroke="#333" strokeWidth="7" strokeLinecap="round"><path d="M33 4V62M4 33H62" /></svg>
            </ControlButton>
            <ControlRule />
            <ControlButton aria-label="缩小">
              <svg width="66" height="66" viewBox="0 0 66 66" stroke="#333" strokeWidth="7" strokeLinecap="round"><path d="M4 33H62" /></svg>
            </ControlButton>
          </ControlCard>
          <ControlCard>
            <ControlButton aria-label="刷新">
              <svg width="64" height="64" viewBox="0 0 64 64" fill="none" stroke="#111" strokeWidth="6" strokeLinecap="round" strokeLinejoin="round">
                <path d="M57 42A27 27 0 1 1 53 17M52 4L54 19L42 20" />
              </svg>
            </ControlButton>
          </ControlCard>
          <ControlCard>
            <ControlButton aria-label="定位">
              <svg width="62" height="62" viewBox="0 0 62 62"><circle cx="31" cy="31" r="26" fill="none" stroke="#000" strokeWidth="6" /><circle cx="31" cy="31" r="10" /></svg>
            </ControlButton>
          </ControlCard>
        </Controls>
        <Brand><BrandIcon />高德地图</Brand>
        <Scale>100米<ScaleLine /></Scale>
      </MapArea>

      <Sheet>
        <Handle />
        <Plans>
          {PLANS.map((plan) => (
            <Plan key={plan.minutes} $selected={plan.selected} aria-pressed={plan.selected}>
              <PlanBody>
                <PlanTime>{plan.minutes}</PlanTime>
                <PlanLine>{plan.distance}<SignalIcon />{plan.lights}</PlanLine>
                <PlanLine>{plan.label}<Cool>{plan.shade}</Cool></PlanLine>
              </PlanBody>
            </Plan>
          ))}
        </Plans>
        <Notice>
          <TreeIcon />
          <NoticeTag>林荫</NoticeTag>
          动态光影计算防晒指数，路线有林荫遮阳哟！
        </Notice>
        <Sport>
          <FlameDisc><FlameIcon /></FlameDisc>
          <SportText>
            <SportTitle>本次行程可消耗热量20大卡</SportTitle>
            <SportNote>结合METs<MiddleDot>·</MiddleDot>路面坡度等维度动态计算</SportNote>
          </SportText>
          <RecordButton>运动记录</RecordButton>
        </Sport>
      </Sheet>

      <Footer>
        <FooterAction $width={194}><ShareIcon />路线分享</FooterAction>
        <FooterAction $width={148}><MoreIcon />更多</FooterAction>
        <StartButton><ArIcon />开始步行导航</StartButton>
      </Footer>
    </Page>
  );
}
